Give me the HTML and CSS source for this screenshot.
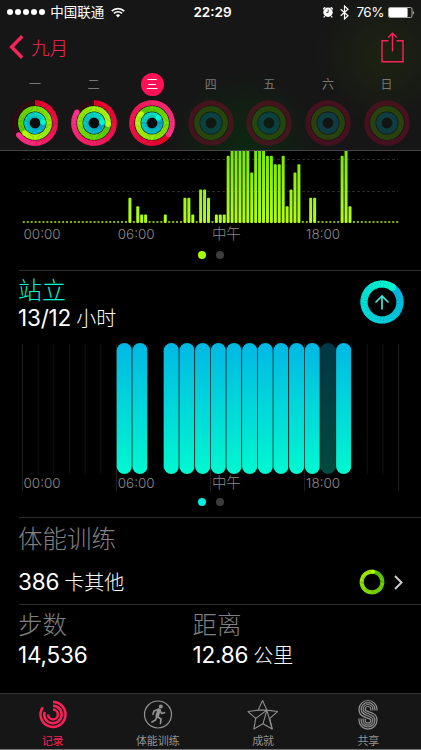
FILE: index.html
```html
<!DOCTYPE html>
<html lang="zh-CN">

<head>
    <meta charset="UTF-8">
    <meta name="viewport" content="width=device-width, initial-scale=1.0">
    <title>健身记录</title>
    <link rel="stylesheet" href="styles.css">
</head>

<body>
    <div class="app">
        <header class="header">
            <div class="status-bar">
                <div class="status-left">
                    <div class="signal"><i></i><i></i><i></i><i></i><i></i></div>
                    <span class="carrier">中国联通</span>
                    <svg class="wifi" width="14" height="11" viewBox="0 0 14 11" fill="none" stroke="#fff" stroke-width="1.7">
                        <path d="M.8 4.1a8.8 8.8 0 0 1 12.4 0M3 6.4a5.7 5.7 0 0 1 8 0" />
                        <path d="M7 10.4 4.9 8.2a3 3 0 0 1 4.2 0z" fill="#fff" stroke="none" />
                    </svg>
                </div>
                <span class="time">22:29</span>
                <div class="status-right">
                    <svg width="12" height="12" viewBox="0 0 12 12">
                        <circle cx="6" cy="6.2" r="4.7" fill="#fff" />
                        <path d="M1.2 3.2 3.2 1.3M10.8 3.2 8.8 1.3M2.8 10.2l-1 1.2M9.2 10.2l1 1.2" stroke="#fff" stroke-width="1.3" />
                        <path d="M6.200 3.600v2.800H4.200" stroke="#161616" stroke-width=".8" fill="none" />
                    </svg>
                    <svg class="bluetooth" width="9" height="15" viewBox="0 0 9 15" fill="none" stroke="#fff" stroke-width="1.2">
                        <path d="M.7 4.2 8 10.8 4.5 14V1L8 4.2.7 10.8" />
                    </svg>
                    <span class="percent">76%</span>
                    <svg width="27" height="11" viewBox="0 0 27 11">
                        <rect x=".5" y=".5" width="23.5" height="10" rx="1.5" fill="none" stroke="#aaa" />
                        <rect x="1" y="1" width="18.6" height="9" rx="1" fill="#fff" />
                        <path d="M25 3.4q1.7 2.1 0 4.2z" fill="#ddd" />
                    </svg>
                </div>
            </div>

            <div class="nav">
                <div class="back">
                    <svg width="15" height="24" viewBox="0 0 15 24" fill="none" stroke="#f92259" stroke-width="3.4">
                        <path d="M13.2 1.2 2.6 12l10.6 10.8" />
                    </svg>
                    <span>九月</span>
                </div>
                <svg width="23" height="31" viewBox="0 0 23 31" fill="none" stroke="#f92259" stroke-width="1.4">
                    <path d="M7.5 8.7H1v21h21v-21h-6.500M11.500 19.500V1.500M7.200 5.600l4.300-4.300 4.300 4.300" />
                </svg>
            </div>

            <div class="week">
                <div class="day"><span>一</span><svg class="ring" data-rings="234,585,445"></svg></div>
                <div class="day"><span>二</span><svg class="ring" data-rings="303,455,445"></svg></div>
                <div class="day selected"><span>三</span><svg class="ring" data-rings="485,670,412"></svg></div>
                <div class="day future"><span>四</span><svg class="ring" data-rings="0,0,0"></svg></div>
                <div class="day future"><span>五</span><svg class="ring" data-rings="0,0,0"></svg></div>
                <div class="day future"><span>六</span><svg class="ring" data-rings="0,0,0"></svg></div>
                <div class="day future"><span>日</span><svg class="ring" data-rings="0,0,0"></svg></div>
            </div>
        </header>

        <main class="content">
            <section class="exercise">
                <svg id="exerciseChart" width="421" height="73" viewBox="0 0 421 73"></svg>
                <div class="hours"><span>00:00</span><span>06:00</span><span>中午</span><span>18:00</span></div>
                <div class="dots green"><i></i><i></i></div>
            </section>

            <section class="stand">
                <div class="stand-head">
                    <div>
                        <h2>站立</h2>
                        <p class="value">13/12 <small>小时</small></p>
                    </div>
                    <svg id="standRing" width="44" height="44" viewBox="-22 -22 44 44"></svg>
                </div>
                <div class="stand-plot">
                    <svg id="standChart" width="421" height="150" viewBox="0 0 421 150"></svg>
                    <div class="hours"><span>00:00</span><span>06:00</span><span>中午</span><span>18:00</span></div>
                </div>
                <div class="dots cyan"><i></i><i></i></div>
            </section>

            <section class="workout">
                <h3>体能训练</h3>
                <div class="workout-row">
                    <p class="value">386 <small>卡其他</small></p>
                    <svg id="workoutRing" width="26" height="26" viewBox="-13 -13 26 26"></svg>
                    <svg class="arrow" width="9" height="15" viewBox="0 0 9 15" fill="none" stroke="#ccc" stroke-width="2">
                        <path d="M1 1l6.500 6.500L1 14" />
                    </svg>
                </div>
            </section>

            <section class="totals">
                <div>
                    <h3>步数</h3>
                    <p class="value">14,536</p>
                </div>
                <div>
                    <h3>距离</h3>
                    <p class="value">12.86 <small>公里</small></p>
                </div>
            </section>
        </main>

        <nav class="tabs">
            <div class="tab active">
                <svg width="30" height="30" viewBox="-15 -15 30 30" fill="none" stroke="currentColor" stroke-width="2.500">
                    <path d="M0-12.500A12.500 12.500 0 1 1-10.200-7.200" />
                    <path d="M0-8.700A8.700 8.700 0 1 1-8.300-2.700" />
                    <path d="M0-4.900A4.900 4.900 0 1 1-4.900 0" />
                </svg>
                <span>记录</span>
            </div>
            <div class="tab">
                <svg width="30" height="30" viewBox="-15 -15 30 30" fill="none" stroke="currentColor" stroke-width="1.200">
                    <circle r="13.500" />
                    <circle cx="2.800" cy="-8" r="2" fill="currentColor" stroke="none" />
                    <path d="M1-4.500-.8 1.500" stroke-width="3.600" stroke-linecap="round" />
                    <path d="M.5-5.200-4-3.500-5-.2M2-4.200 3.500-1 6.500-1.800M-.5 2.200 3 4.500 2.500 9M-1 1.800-2.500 5.500-6 7.500" stroke-width="1.700" stroke-linecap="round" stroke-linejoin="round" />
                </svg>
                <span>体能训练</span>
            </div>
            <div class="tab">
                <svg width="34" height="32" viewBox="0 0 34 32" fill="none" stroke="currentColor" stroke-width="1.100" stroke-linejoin="round">
                    <path d="M16.500 1.500 21 11.500 32 13 24 20 26.500 31 17 25.500 7.500 31 9.500 20 1.500 13 12 11.500z" />
                    <path d="M21 11.500 9.500 20M21 11.500 17 25.500M21 11.500 26.500 31M12 11.500 21 11.500" />
                </svg>
                <span>成就</span>
            </div>
            <div class="tab">
                <svg width="20" height="30" viewBox="0 0 20 30" fill="none" stroke="currentColor" stroke-width="1.200">
                    <path d="M19 11V9.800A9 8.800 0 0 0 1 9.800C1 20 12.800 17 12.800 20.800A2.800 2.800 0 0 1 7.200 20.800V19" />
                    <path d="M16.900 11V9.800A6.900 6.700 0 0 0 3.100 9.800C3.100 17.600 14.900 15 14.900 20.800A4.900 4.800 0 0 1 5.100 20.800V19" />
                    <path d="M14.900 11V9.800A4.900 4.800 0 0 0 5.100 9.800C5.100 15.500 16.900 13 16.900 20.800A6.900 6.700 0 0 1 3.100 20.800V19" />
                    <path d="M12.800 11V9.800A2.800 2.800 0 0 0 7.200 9.800C7.200 13.600 19 10.800 19 20.800A9 8.800 0 0 1 1 20.800V19" />
                </svg>
                <span>共享</span>
            </div>
        </nav>
    </div>
    <script src="script.js"></script>
</body>

</html>
```
FILE: styles.css
```css
* {
    box-sizing: border-box;
}

body {
    margin: 0;
    background: #000;
    color: #fff;
    font-family: Inter, "Noto Sans CJK SC", sans-serif;
}

h2, h3, p {
    margin: 0;
    font-weight: 300;
}

svg {
    display: block;
    flex: none;
}

.app {
    width: 421px;
    height: 750px;
    display: flex;
    flex-direction: column;
    overflow: hidden;
}

.header {
    height: 151px;
    flex: none;
    border-bottom: 1px solid #444;
    background:
        radial-gradient(circle at 385px 55px, rgba(40, 60, 10, 0.35), transparent 70px),
        radial-gradient(circle at 245px 145px, rgba(0, 60, 10, 0.45), transparent 75px),
        #161616;
}

.status-bar {
    height: 24px;
    padding: 0 6px 0 7px;
    display: grid;
    grid-template-columns: 1fr auto 1fr;
    align-items: center;
    font-size: 13.5px;
}

.status-left, .status-right {
    display: flex;
    align-items: center;
}

.status-right {
    justify-content: flex-end;
}

.signal {
    display: flex;
    gap: 1.6px;
    margin-right: 5px;
}

.signal i {
    width: 6.4px;
    height: 6.4px;
    border-radius: 50%;
    background: #fff;
}

.carrier {
    line-height: 18px;
}

.wifi {
    margin-left: 7px;
}

.time {
    font-weight: 600;
    font-size: 13.5px;
    padding-left: 3px;
}

.bluetooth {
    margin: 0 7px 0 6px;
}

.percent {
    margin-right: 4px;
    letter-spacing: -0.5px;
}

.nav {
    height: 46px;
    padding: 0 17px 0 9px;
    display: flex;
    justify-content: space-between;
    align-items: center;
    color: #f92259;
}

.back {
    display: flex;
    align-items: center;
    gap: 7px;
    font-size: 18.5px;
    font-weight: 300;
}

.back span {
    margin-top: -1px;
}

.week {
    display: grid;
    grid-template-columns: repeat(7, 58.6px);
    padding-left: 5.7px;
}

.day {
    display: flex;
    flex-direction: column;
    align-items: center;
    gap: 3px;
}

.day span {
    width: 23px;
    height: 23px;
    margin-top: 3px;
    line-height: 23px;
    text-align: center;
    font-size: 12px;
    color: #777;
}

.day.selected span {
    border-radius: 50%;
    background: #ff1155;
    color: #fff;
}

.ring {
    width: 48px;
    height: 48px;
}

.content {
    flex: 1;
}

.exercise {
    height: 119px;
}

.hours {
    display: grid;
    grid-template-columns: repeat(4, 94.2px);
    padding-left: 23.500px;
    height: 20px;
    line-height: 20px;
    font-size: 13.500px;
    font-weight: 300;
    color: #8a8a8a;
}

.hours span:nth-child(3) {
    font-size: 14.500px;
}

.dots {
    display: flex;
    justify-content: center;
    gap: 10px;
}

.dots i {
    width: 8px;
    height: 8px;
    border-radius: 50%;
    background: #3c3c3c;
}

.exercise .dots {
    margin-top: 7px;
}

.dots.green i:first-child {
    background: #a6ff00;
}

.dots.cyan i:first-child {
    background: #00f0e0;
}

.stand, .workout, .totals {
    background: linear-gradient(#2c2c2c, #2c2c2c) 19px 0 / 100% 1px no-repeat;
}

.stand {
    height: 247px;
}

.stand-head {
    height: 73px;
    padding: 7px 17px 0 18px;
    display: flex;
    justify-content: space-between;
}

.stand-head svg {
    margin-top: 3px;
}

h2 {
    color: #00f5d0;
    font-size: 24px;
    line-height: 28px;
}

h3 {
    color: #808080;
    font-size: 24.500px;
    line-height: 28px;
}

.value {
    font-size: 22.500px;
    line-height: 26px;
    font-weight: 400;
    letter-spacing: -0.2px;
    white-space: nowrap;
}

.value small {
    font-size: 20px;
    letter-spacing: 0;
    font-weight: 300;
    margin-left: -1px;
}

.stand-plot {
    display: grid;
}

.stand-plot > * {
    grid-area: 1 / 1;
}

.stand-plot .hours {
    align-self: end;
}

.stand .dots {
    margin-top: 5px;
}

.workout {
    height: 87px;
    padding: 8px 18px 0 18px;
}

.workout-row {
    display: flex;
    align-items: center;
    margin-top: 15px;
}

.workout-row .value {
    flex: 1;
    padding-top: 1px;
}

.workout-row .arrow {
    margin-left: 9px;
}

.totals {
    display: grid;
    grid-template-columns: 174.500px 1fr;
    padding: 7px 0 0 18px;
}

.totals .value {
    margin-top: 3px;
}

.tabs {
    height: 57px;
    flex: none;
    display: grid;
    grid-template-columns: repeat(4, 1fr);
    background: #161616;
    border-top: 1px solid #333;
    border-bottom: 1px solid #777;
    color: #929292;
}

.tab {
    display: flex;
    flex-direction: column;
    align-items: center;
    font-size: 11px;
}

.tab svg {
    height: 31px;
    margin-top: 5px;
}

.tab span {
    line-height: 17px;
    margin-top: 3px;
}

.tab.active {
    color: #fa2158;
}
```
FILE: script.js
```js
const NS = 'http://www.w3.org/2000/svg';

const COLORS = {
    move: [[228, 0, 38], [255, 50, 140]],
    exercise: [[80, 205, 0], [184, 255, 8]],
    stand: [[0, 180, 228], [0, 248, 208]],
};

function add(parent, tag, attrs) {
    const el = document.createElementNS(NS, tag);
    for (const key in attrs) el.setAttribute(key, attrs[key]);
    parent.appendChild(el);
    return el;
}

function mix(colors, t) {
    return 'rgb(' + colors[0].map((c, i) => Math.round(c + (colors[1][i] - c) * t)).join(',') + ')';
}

function point(r, deg) {
    const a = (deg - 90) * Math.PI / 180;
    return [r * Math.cos(a), r * Math.sin(a)];
}

// 圆环由小弧段组成，颜色沿进度渐变
function drawRing(svg, r, width, end, colors, opacity) {
    add(svg, 'circle', { r, fill: 'none', stroke: mix(colors, 0.3), 'stroke-width': width, opacity });
    if (!end) return;
    const start = Math.max(0, end - 360);
    const steps = 72;
    const size = (end - start) / steps;
    for (let i = 0; i < steps; i++) {
        const a = point(r, start + i * size);
        const b = point(r, start + (i + 1) * size + (i < steps - 1 ? 1 : 0));
        add(svg, 'path', {
            d: `M${a} A${r} ${r} 0 0 1 ${b}`,
            fill: 'none',
            stroke: mix(colors, i / (steps - 1)),
            'stroke-width': width,
        });
    }
    const [cx, cy] = point(r, end);
    add(svg, 'circle', { cx, cy, r: width / 2, fill: mix(colors, 1) });
}

document.querySelectorAll('.ring').forEach(svg => {
    svg.setAttribute('viewBox', '-24 -24 48 48');
    const [move, exercise, stand] = svg.dataset.rings.split(',').map(Number);
    const opacity = move ? 0.15 : 0.23;
    add(svg, 'circle', { r: 22.8, fill: '#0c0c0c', opacity: move ? 1 : 0.3 });
    drawRing(svg, 20.2, 5.2, move, COLORS.move, opacity);
    drawRing(svg, 14.2, 5.4, exercise, COLORS.exercise, opacity);
    drawRing(svg, 8.1, 5.4, stand, COLORS.stand, opacity);
});

const standRing = document.getElementById('standRing');
drawRing(standRing, 18, 7.2, 395, COLORS.stand, 0.2);
add(standRing, 'path', { d: 'M0 7.5V-6M-6.500 .5 0-6 6.500 .5', fill: 'none', stroke: '#3fe8d8', 'stroke-width': 1.7 });

drawRing(document.getElementById('workoutRing'), 10.3, 4, 366, COLORS.exercise, 0.2);

// 锻炼：每 15 分钟一根柱
const exerciseData = {
    27: 3, 29: 2, 30: 1, 31: 1, 36: 1, 41: 3, 42: 3, 43: 1, 45: 4, 46: 4, 47: 3,
    49: 1, 50: 1, 51: 1, 52: 8, 53: 9, 54: 9, 55: 9, 56: 9, 57: 9, 58: 6, 59: 9,
    60: 9, 61: 9, 62: 8, 63: 8, 64: 7, 65: 7, 66: 8, 67: 2, 68: 4, 69: 6, 70: 7,
    73: 3, 74: 3, 81: 8, 82: 9, 83: 2,
};
const ex = document.getElementById('exerciseChart');
ex.insertAdjacentHTML('beforeend', `<defs><linearGradient id="lime" gradientUnits="userSpaceOnUse" x1="0" y1="0" x2="0" y2="72">
    <stop offset="0" stop-color="#78e800"/><stop offset="1" stop-color="#b4ff10"/></linearGradient></defs>`);
[8.5, 40.5].forEach(y => add(ex, 'path', { d: `M22 ${y}H398`, stroke: '#282828', 'stroke-dasharray': '3 2' }));
for (let i = 0; i < 96; i++) {
    const level = exerciseData[i];
    const height = level ? level * 8.4 : 2;
    const w = level ? 3 : 2;
    add(ex, 'rect', {
        x: 23.8 + i * 3.93 - w / 2, y: level ? 72 - height : 70,
        width: w, height, rx: level ? 1 : 0,
        fill: level ? 'url(#lime)' : '#86b510',
    });
}

// 站立：每小时一列
const st = document.getElementById('standChart');
st.insertAdjacentHTML('beforeend', `<defs><linearGradient id="aqua" x1="0" y1="0" x2="0" y2="1">
    <stop offset="0" stop-color="#00b8e4"/><stop offset="1" stop-color="#00f8d0"/></linearGradient></defs>`);
const stood = [6, 7, 9, 10, 11, 12, 13, 14, 15, 16, 17, 18, 20];
const step = 15.67;
for (let i = 0; i <= 24; i++) {
    const x = 22.5 + i * step;
    const major = i % 6 === 0;
    add(st, 'path', { d: `M${x} 1V${major ? 148 : 131}`, stroke: major ? '#202020' : '#121212' });
    if (stood.includes(i) || i === 19) {
        add(st, 'rect', {
            x: x + 0.2, y: 0, width: 15.2, height: 131, rx: 7.6,
            fill: 'url(#aqua)', opacity: i === 19 ? 0.3 : 1,
        });
    }
}
```
